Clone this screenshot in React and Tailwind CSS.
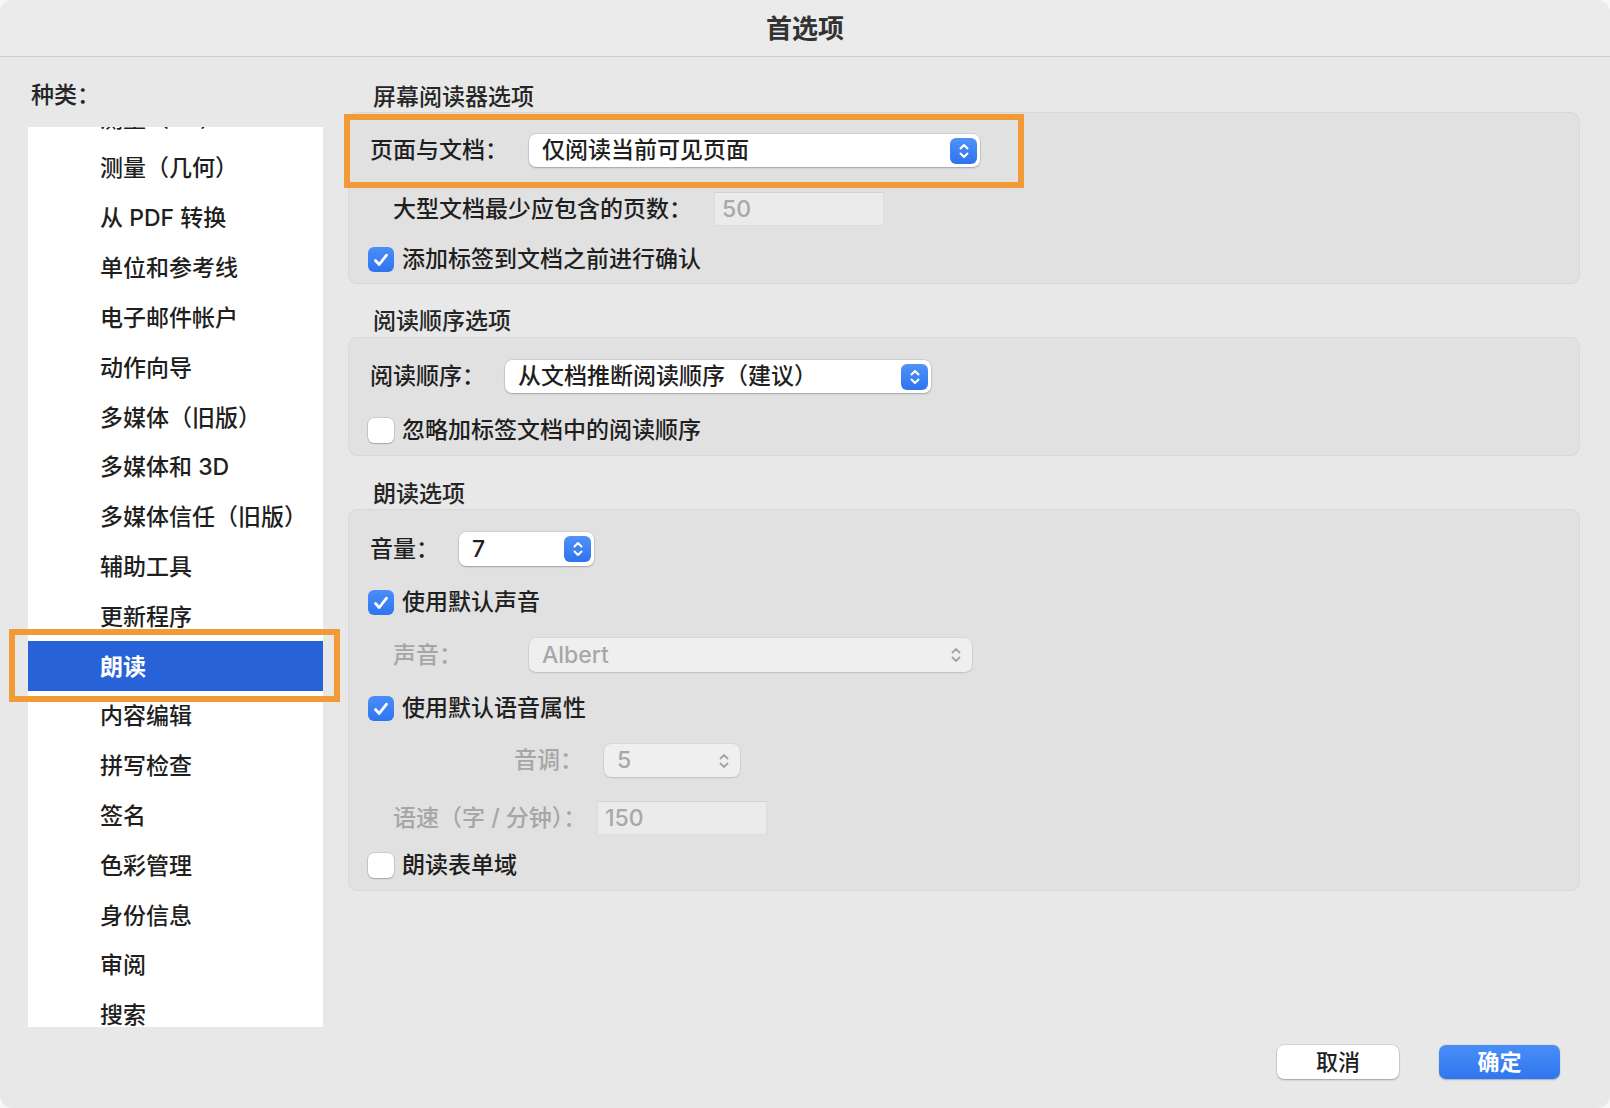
import React from "react";

const items = [
  "测量（3D）",
  "测量（几何）",
  "从 PDF 转换",
  "单位和参考线",
  "电子邮件帐户",
  "动作向导",
  "多媒体（旧版）",
  "多媒体和 3D",
  "多媒体信任（旧版）",
  "辅助工具",
  "更新程序",
  "朗读",
  "内容编辑",
  "拼写检查",
  "签名",
  "色彩管理",
  "身份信息",
  "审阅",
  "搜索",
];

function Stepper() {
  return (
    <span className="w-[27px] h-[26px] rounded-[6px] bg-linear-to-b from-[#4f92f8] to-[#2f73ee] flex items-center justify-center shrink-0">
      <svg width="12" height="18" viewBox="0 0 12 18">
        <path
          d="M2.5 6.5 L6 3 L9.5 6.5 M2.5 11.5 L6 15 L9.5 11.5"
          fill="none"
          stroke="white"
          strokeWidth="2"
          strokeLinecap="round"
          strokeLinejoin="round"
        />
      </svg>
    </span>
  );
}

function GrayStepper() {
  return (
    <span className="w-[27px] h-[26px] flex items-center justify-center shrink-0">
      <svg width="12" height="18" viewBox="0 0 12 18">
        <path
          d="M2.5 6.5 L6 3 L9.5 6.5 M2.5 11.5 L6 15 L9.5 11.5"
          fill="none"
          stroke="#a3a3a3"
          strokeWidth="1.8"
          strokeLinecap="round"
          strokeLinejoin="round"
        />
      </svg>
    </span>
  );
}

function Select({ w, h = "h-[34px]", text }) {
  return (
    <div
      className={`${w} ${h} bg-white rounded-[7px] shadow-[0_0_0_0.5px_rgba(0,0,0,0.14),0_1px_2px_rgba(0,0,0,0.22)] flex items-center justify-between pl-[13px] pr-[3px] shrink-0`}
    >
      <span className="text-[#1f1f1f]">{text}</span>
      <Stepper />
    </div>
  );
}

function DisabledSelect({ w, h = "h-[34px]", text }) {
  return (
    <div
      className={`${w} ${h} bg-[#efefef] rounded-[7px] shadow-[0_0_0_0.5px_rgba(0,0,0,0.08),0_1px_2px_rgba(0,0,0,0.12)] flex items-center justify-between pl-[13px] pr-[3px] shrink-0`}
    >
      <span className="text-[#a8a8a8]">{text}</span>
      <GrayStepper />
    </div>
  );
}

function DisabledInput({ text }) {
  return (
    <div className="w-[170px] h-[34px] bg-[#ebebeb] border border-[#dcdcdc] border-t-[#d2d2d2] flex items-center pl-[7px] shrink-0">
      <span className="text-[#a8a8a8]">{text}</span>
    </div>
  );
}

function Check({ checked }) {
  if (checked) {
    return (
      <span className="w-[26px] h-[25px] rounded-[6px] bg-linear-to-b from-[#4a8ef8] to-[#2f74ef] flex items-center justify-center shrink-0">
        <svg width="18" height="16" viewBox="0 0 18 16">
          <path
            d="M3.5 8.5 L7.2 12.5 L14.5 3.2"
            fill="none"
            stroke="white"
            strokeWidth="2.8"
            strokeLinecap="round"
            strokeLinejoin="round"
          />
        </svg>
      </span>
    );
  }
  return (
    <span className="w-[26px] h-[25px] rounded-[6px] bg-white shadow-[0_0_0_0.5px_rgba(0,0,0,0.18),0_1px_1.5px_rgba(0,0,0,0.2)] shrink-0" />
  );
}

function CheckRow({ checked, label, mt }) {
  return (
    <div className={`${mt} h-[25px] flex items-center pl-[19px]`}>
      <Check checked={checked} />
      <span className="ml-[8px] text-[#1f1f1f]">{label}</span>
    </div>
  );
}

function SectionTitle({ children, mt }) {
  return (
    <div className={`${mt} h-[30px] leading-[30px] pl-[25px] text-[#262626]`}>{children}</div>
  );
}

export default function App() {
  return (
    <div className="w-[1610px] h-[1108px] bg-[#f7f7f7] font-['Inter','Noto_Sans_CJK_SC',sans-serif] font-medium text-[23px]">
      <div className="relative w-full h-full rounded-[13px] bg-[#e8e8e8] overflow-hidden flex flex-col">
        {/* Title bar */}
        <div className="h-[57px] shrink-0 bg-[#ebebeb] border-b border-[#cdcdcd] flex items-center justify-center">
          <span className="text-[26px] font-bold text-[#333333]">首选项</span>
        </div>

        <div className="flex flex-1 min-h-0">
          {/* Left column */}
          <div className="w-[348px] shrink-0 pl-[28px] flex flex-col">
            <div className="mt-[22px] h-[32px] leading-[32px] pl-[3px] text-[#262626]">种类：</div>
            <div className="mt-[16px] w-[295px] h-[900px] bg-white overflow-hidden">
              <div className="mt-[-34px]">
                {items.map((it, i) => (
                  <div
                    key={i}
                    className={`h-[49.82px] flex items-center pl-[72px] pt-[2px] ${
                      i === 11 ? "bg-[#2862d8] text-white font-semibold" : "text-[#1f1f1f]"
                    }`}
                  >
                    {it}
                  </div>
                ))}
              </div>
            </div>
          </div>

          {/* Right column */}
          <div className="flex-1 pr-[30px] pt-[25px] flex flex-col">
            <SectionTitle mt="mt-0">屏幕阅读器选项</SectionTitle>
            <div className="rounded-[9px] bg-[#e1e1e1] border border-[#d8d8d8] pt-[21px] pb-[11px] flex flex-col">
              <div className="h-[33px] flex items-center pl-[21px]">
                <span className="w-[159px] shrink-0 text-[#1f1f1f]">页面与文档：</span>
                <Select w="w-[451px]" h="h-[33px]" text="仅阅读当前可见页面" />
              </div>
              <div className="mt-[25px] h-[34px] flex items-center pl-[44px]">
                <span className="w-[321px] shrink-0 text-[#1f1f1f]">大型文档最少应包含的页数：</span>
                <DisabledInput text="50" />
              </div>
              <CheckRow checked label="添加标签到文档之前进行确认" mt="mt-[21px]" />
            </div>

            <SectionTitle mt="mt-[22px]">阅读顺序选项</SectionTitle>
            <div className="mt-[1px] rounded-[9px] bg-[#e1e1e1] border border-[#d8d8d8] pt-[22px] pb-[12px] flex flex-col">
              <div className="h-[33px] flex items-center pl-[21px]">
                <span className="w-[135px] shrink-0 text-[#1f1f1f]">阅读顺序：</span>
                <Select w="w-[426px]" h="h-[33px]" text="从文档推断阅读顺序（建议）" />
              </div>
              <CheckRow checked={false} label="忽略加标签文档中的阅读顺序" mt="mt-[25px]" />
            </div>

            <SectionTitle mt="mt-[23px]">朗读选项</SectionTitle>
            <div className="rounded-[9px] bg-[#e1e1e1] border border-[#d8d8d8] pt-[22px] pb-[12px] flex flex-col">
              <div className="h-[34px] flex items-center pl-[21px]">
                <span className="w-[89px] shrink-0 text-[#1f1f1f]">音量：</span>
                <Select w="w-[135px]" text="7" />
              </div>
              <CheckRow checked label="使用默认声音" mt="mt-[24px]" />
              <div className="mt-[23px] h-[34px] flex items-center pl-[44px]">
                <span className="w-[136px] shrink-0 text-[#a6a6a6]">声音：</span>
                <DisabledSelect w="w-[443px]" text="Albert" />
              </div>
              <CheckRow checked label="使用默认语音属性" mt="mt-[24px]" />
              <div className="mt-[23px] h-[33px] flex items-center pl-[165px]">
                <span className="w-[90px] shrink-0 text-[#a6a6a6]">音调：</span>
                <DisabledSelect w="w-[136px]" h="h-[33px]" text="5" />
              </div>
              <div className="mt-[24px] h-[34px] flex items-center pl-[44px]">
                <span className="w-[204px] shrink-0 text-[#a6a6a6]">语速（字 / 分钟）：</span>
                <DisabledInput text="150" />
              </div>
              <CheckRow checked={false} label="朗读表单域" mt="mt-[18px]" />
            </div>

            <div className="mt-auto pb-[29px] pr-[20px] flex justify-end gap-[40px]">
              <button className="w-[122px] h-[34px] rounded-[7px] bg-white shadow-[0_0_0_0.5px_rgba(0,0,0,0.14),0_1px_2px_rgba(0,0,0,0.25)] text-[22px] text-[#1f1f1f]">
                取消
              </button>
              <button className="w-[121px] h-[34px] rounded-[7px] bg-linear-to-b from-[#4a8ef8] to-[#2f76ef] shadow-[0_0.5px_1.5px_rgba(0,0,0,0.25)] text-[22px] text-white font-semibold">
                确定
              </button>
            </div>
          </div>
        </div>

        {/* Annotation highlight boxes */}
        <div className="absolute left-[344px] top-[114px] w-[680px] h-[74px] border-[6px] border-[#f29a38] pointer-events-none" />
        <div className="absolute left-[9px] top-[629px] w-[331px] h-[73px] border-[6px] border-[#f29a38] pointer-events-none" />
      </div>
    </div>
  );
}
